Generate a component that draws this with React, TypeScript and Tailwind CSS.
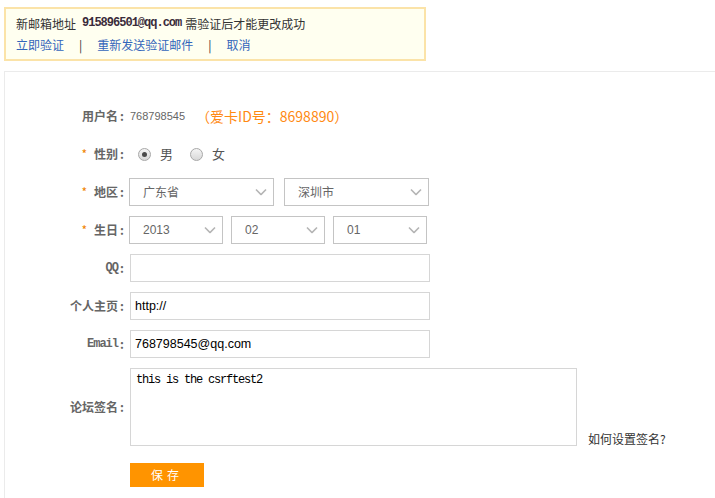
import React from "react";

const cjk = "font-['SimSun','Noto_Sans_CJK_SC',sans-serif]";

function Chevron() {
  return (
    <svg
      className="pointer-events-none absolute right-[7px] top-1/2 h-[7px] w-[12px] -translate-y-1/2"
      viewBox="0 0 12 7"
      fill="none"
      aria-hidden
    >
      <path d="M1 1l5 5 5-5" stroke="#b5b5b5" strokeWidth="1.6" />
    </svg>
  );
}

function Select({ value, width }: { value: string; width: string }) {
  return (
    <div className={`relative h-[28px] ${width}`}>
      <select
        defaultValue={value}
        className="h-full w-full appearance-none border border-[#c4c4c4] bg-white pl-[13px] text-[12px] text-[#666] outline-none"
      >
        <option value={value}>{value}</option>
      </select>
      <Chevron />
    </div>
  );
}

function Radio({ checked, label }: { checked?: boolean; label: string }) {
  return (
    <label className="flex items-center">
      <span className="flex h-[13px] w-[13px] items-center justify-center rounded-full border border-[#a8a8a8] bg-gradient-to-b from-[#f4f4f4] to-[#d8d8d8]">
        {checked && <span className="h-[5px] w-[5px] rounded-full bg-[#4a4a4a]" />}
      </span>
      <span className="ml-[9px] text-[13px] text-[#555]">{label}</span>
    </label>
  );
}

function Label({
  children,
  required,
  mono,
}: {
  children: React.ReactNode;
  required?: boolean;
  mono?: boolean;
}) {
  return (
    <div className="flex w-[120px] shrink-0 items-center justify-end text-[12px] font-bold text-[#666]">
      {required && <span className="mr-[7px] font-normal text-[#f08300]">*</span>}
      <span className={mono ? "font-['Liberation_Mono',monospace] tracking-[-1px]" : ""}>{children}</span>
      <span className="w-[7px] pl-[2px]">:</span>
    </div>
  );
}

function Row({ children }: { children: React.ReactNode }) {
  return <div className="mb-[10px] flex h-[28px] items-center">{children}</div>;
}

export default function App() {
  return (
    <div className={`min-h-[498px] bg-white ${cjk}`}>
      <div className="pl-[4px] pt-[7px]">
        <div className="flex h-[54px] w-[422px] flex-col justify-center gap-[4px] border-2 border-[#fbe3a8] bg-[#fffff0] px-[10px] text-[12px] text-[#333]">
          <div className="flex items-center leading-[17px]">
            新邮箱地址
            <b className="ml-[6px] mr-[4px] font-['Liberation_Mono',monospace] tracking-[-1px] text-[#3a2b3a]">
              915896501@qq.com
            </b>
            需验证后才能更改成功
          </div>
          <div className="flex items-center leading-[17px]">
            <a href="#" className="text-[#3366bb]">立即验证</a>
            <span className="mx-[15px] text-[#333]">|</span>
            <a href="#" className="text-[#3366bb]">重新发送验证邮件</a>
            <span className="mx-[15px] text-[#333]">|</span>
            <a href="#" className="text-[#3366bb]">取消</a>
          </div>
        </div>
      </div>

      <div className="ml-[4px] mt-[10px] border-l border-t border-[#ebebeb] pt-[30px]">
        <Row>
          <Label>用户名</Label>
          <span className="ml-[5px] font-['Liberation_Sans',sans-serif] text-[11px] text-[#666]">768798545</span>
          <span className="ml-[11px] text-[14px] text-[#ff8a12]">（爱卡ID号：8698890）</span>
        </Row>

        <Row>
          <Label required>性别</Label>
          <div className="ml-[13px] flex items-center gap-[17px]">
            <Radio checked label="男" />
            <Radio label="女" />
          </div>
        </Row>

        <Row>
          <Label required>地区</Label>
          <div className="ml-[4px] flex gap-[10px]">
            <Select value="广东省" width="w-[145px]" />
            <Select value="深圳市" width="w-[145px]" />
          </div>
        </Row>

        <Row>
          <Label required>生日</Label>
          <div className="ml-[4px] flex gap-[8px] font-['Liberation_Sans',sans-serif]">
            <Select value="2013" width="w-[94px]" />
            <Select value="02" width="w-[94px]" />
            <Select value="01" width="w-[94px]" />
          </div>
        </Row>

        <Row>
          <Label mono>QQ</Label>
          <input className="ml-[5px] h-[28px] w-[300px] border border-[#d6d6d6] px-[5px] text-[12px] outline-none" />
        </Row>

        <Row>
          <Label>个人主页</Label>
          <input
            defaultValue="http://"
            className="ml-[5px] h-[28px] w-[300px] border border-[#d6d6d6] px-[4px] font-['Liberation_Sans',sans-serif] text-[12.5px] text-black outline-none"
          />
        </Row>

        <Row>
          <Label mono>Email</Label>
          <input
            defaultValue="768798545@qq.com"
            className="ml-[5px] h-[28px] w-[300px] border border-[#d6d6d6] px-[4px] font-['Liberation_Sans',sans-serif] text-[12.5px] text-black outline-none"
          />
        </Row>

        <div className="flex items-center">
          <Label>论坛签名</Label>
          <textarea
            defaultValue="this is the csrftest2"
            className="ml-[5px] h-[78px] w-[447px] resize-none border border-[#d6d6d6] px-[5px] py-[3px] font-['Liberation_Mono',monospace] text-[12px] leading-[16px] tracking-[-1.2px] text-black outline-none"
          />
          <a href="#" className="ml-[11px] self-end text-[12px] leading-[14px] text-[#333]">
            如何设置签名?
          </a>
        </div>

        <div className="flex pb-[12px] pl-[125px] pt-[17px]">
          <button className="h-[24px] w-[74px] bg-[#ff9400] text-[12px] tracking-[4px] text-white">
            保存
          </button>
        </div>
      </div>
    </div>
  );
}
